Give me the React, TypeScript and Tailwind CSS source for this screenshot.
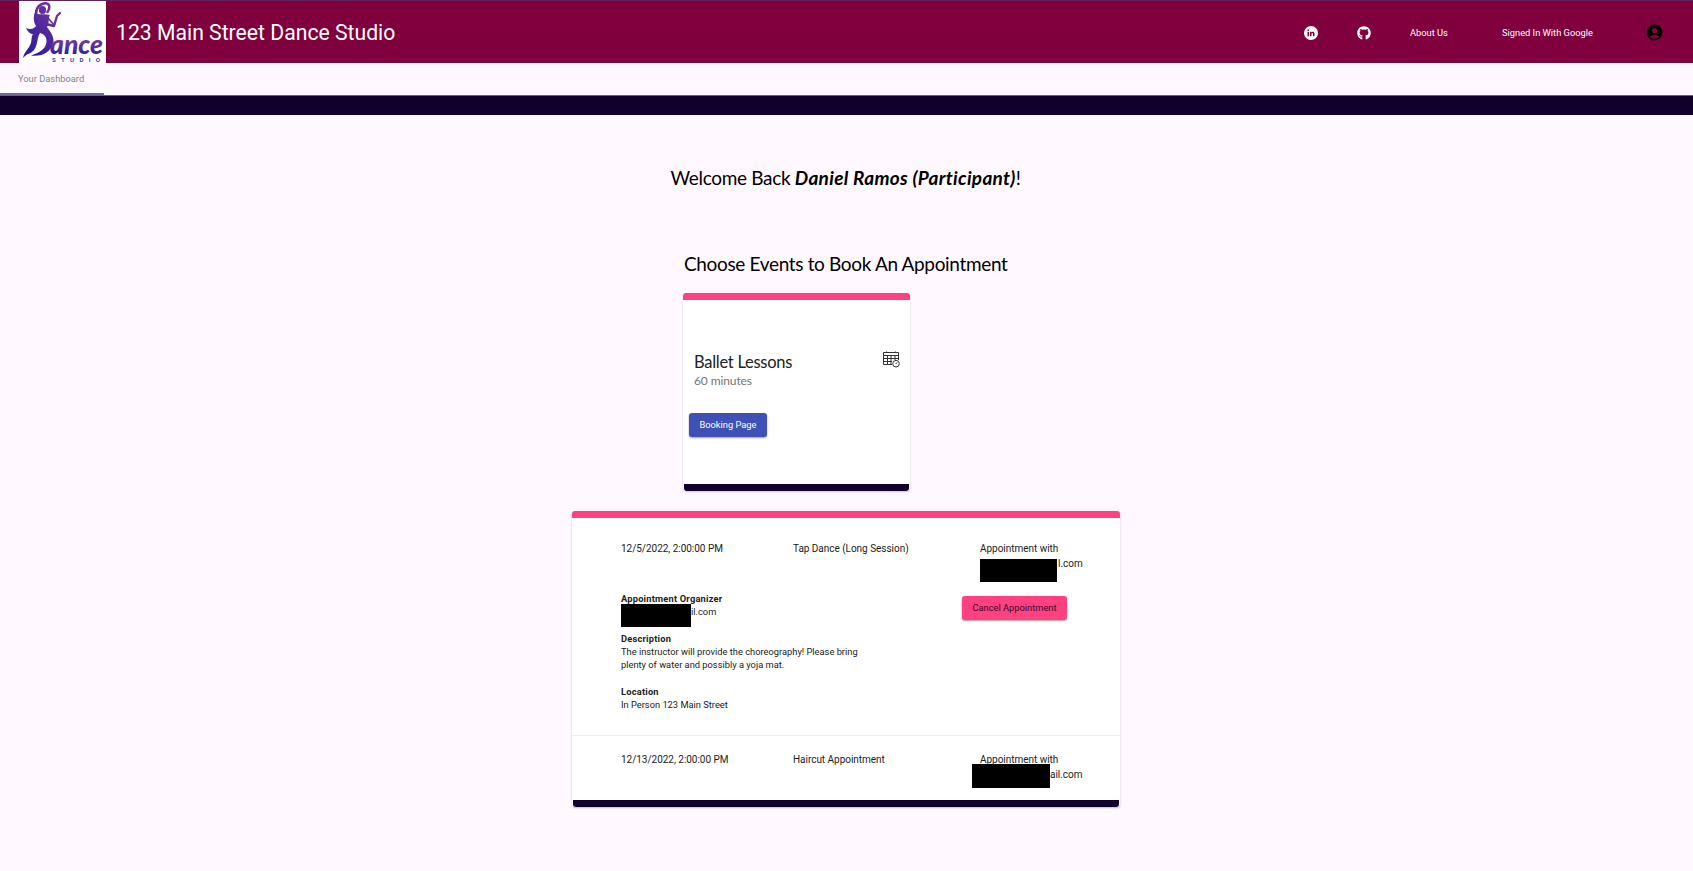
import { FaGithub } from "react-icons/fa";
import { MdAccountCircle } from "react-icons/md";

function Logo() {
  return (
    <svg className="ml-[19px] block h-[62px] w-[87px] shrink-0 bg-white" viewBox="0 0 87 62">
      <defs>
        <linearGradient id="ink" x1="0" y1="58" x2="52" y2="0" gradientUnits="userSpaceOnUse">
          <stop offset="0" stopColor="#1c1a9c" />
          <stop offset="0.5" stopColor="#54289c" />
          <stop offset="1" stopColor="#8a3d9a" />
        </linearGradient>
        <linearGradient id="word" x1="0" y1="54" x2="0" y2="38" gradientUnits="userSpaceOnUse">
          <stop offset="0" stopColor="#2b219c" />
          <stop offset="1" stopColor="#7d3a9c" />
        </linearGradient>
      </defs>
      <g fill="none" stroke="url(#ink)" strokeLinecap="round" strokeLinejoin="round">
        <path d="M17.500 15C16 8 20 3 26 2.200C31 2 31.500 7 28.500 11" strokeWidth="2.600" />
        <path d="M27 23L35 25L38 15L41 12" strokeWidth="2.400" />
        <path d="M29 17L35 24" strokeWidth="1.800" />
      </g>
      <g fill="url(#ink)">
        <ellipse cx="23.500" cy="9" rx="3.600" ry="4" />
        <path d="M16 11C19 15 25 12 31 14C28.500 18 31 22 28 26C32 31 36 37 34 43C31.500 51 23 56 12 54.500C19 52 26.500 49 27.500 41C28 36 25 33 21 32C18 36 19 44 15 49C12 53 8 52 4 57C5 51 10 48 12 42C13 38 12 36 14 33C11 33 9 31 7 27C11 29 15 28 17 25C14.500 21 14 16 16 11Z" />
      </g>
      <text x="31" y="53.200" fontSize="26" fontStyle="italic" fontWeight="900" fontFamily="Lato, sans-serif" textLength="53" lengthAdjust="spacingAndGlyphs" fill="url(#word)">ance</text>
      <text x="33" y="61" fontSize="6.200" fontWeight="700" fontFamily="Roboto, sans-serif" textLength="48" fill="#4b3a94">STUDIO</text>
    </svg>
  );
}

function LinkedinIcon() {
  return (
    <span className="flex h-[14px] w-[14px] items-center justify-center overflow-hidden rounded-full bg-white text-[#80003e]">
      <svg className="h-[14px] w-[14px]" viewBox="0 0 14 14" fill="currentColor">
        <path d="M3.500 5.700H5V10.300H3.500ZM3.500 3.600H5V5H3.500ZM6 5.700H7.400V6.400C8.200 5.200 10.500 5.300 10.500 7.500V10.300H9V7.900C9 6.500 7.500 6.600 7.500 7.800V10.300H6Z" />
      </svg>
    </span>
  );
}

function CalendarIcon() {
  return (
    <svg className="h-[17px] w-[17px]" viewBox="0 0 17 17" fill="none" stroke="#333" strokeWidth="1">
      <path d="M0.500 1.500H15.500V9M0.500 1.500V13.500H9M0.500 4.500H15.500M0.500 7.500H15.500M0.500 10.500H9M4.500 4.500V13.500M8 4.500V13.500M12 4.500V9" />
      <path d="M3.500 0.500V2M12.500 0.500V2" />
      <circle cx="13" cy="12.700" r="3.300" fill="#fff" />
      <path d="M12.700 13L14 11.500" />
    </svg>
  );
}

export default function App() {
  return (
    <div className="flex h-[871px] w-[1693px] flex-col overflow-hidden bg-[#fff8ff] font-['Roboto',sans-serif] text-[10px] text-[#212121]">
      <header className="flex h-[63px] shrink-0 items-center border-t border-[#61215f] bg-[#80003e] text-white">
        <Logo />
        <h1 className="ml-[10px] pt-px text-[21.2px] leading-none">123 Main Street Dance Studio</h1>
        <div className="ml-auto flex items-center pt-px text-[9.3px] leading-none">
          <LinkedinIcon />
          <FaGithub className="ml-[39px] h-[14px] w-[14px]" />
          <span className="ml-[39px] w-[92px]">About Us</span>
          <span className="w-[143px]">Signed In With Google</span>
          <MdAccountCircle className="mr-[29px] h-[19px] w-[19px] text-black" />
        </div>
      </header>
      <nav className="flex h-[33px] shrink-0 border-b border-[#665f7c]">
        <div className="flex h-[32px] w-[104px] items-center border-b-2 border-[#6d6c9f] pl-[18px] pt-[2px] text-[9.3px] text-[#858087]">
          Your Dashboard
        </div>
      </nav>
      <div className="h-[19px] shrink-0 bg-[#11002b]" />
      <main className="mr-[2px] flex flex-col items-center font-['Lato',sans-serif] text-black">
        <h2 className="mt-[50px] whitespace-nowrap text-[19px] leading-[26px] tracking-[-0.33px]">
          Welcome Back <b className="tracking-[0.3px]"><i>Daniel Ramos (Participant)</i></b>!
        </h2>
        <section className="mt-[60px] w-[325px]">
          <h2 className="whitespace-nowrap pl-px text-[19px] leading-[26px] tracking-[-0.34px]">Choose Events to Book An Appointment</h2>
          <article className="mt-[16px] flex h-[198px] w-[227px] flex-col rounded-[3px] bg-white shadow-[0_1px_2px_rgba(0,0,0,0.2)]">
            <div className="h-[7px] rounded-t-[3px] bg-[#ff4081]" />
            <div className="flex justify-between pl-[11px] pr-[10px] pt-[51px]">
              <div>
                <h3 className="text-[16.5px] leading-[22px] tracking-[-0.27px] text-[#212121]">Ballet Lessons</h3>
                <p className="text-[12px] leading-[16px] tracking-[-0.1px] text-[#757575]">60 minutes</p>
              </div>
              <CalendarIcon />
            </div>
            <button className="ml-[6px] mt-[24px] h-[24px] w-[78px] rounded-[3px] bg-[#3f51b5] font-['Roboto',sans-serif] text-[9.3px] text-white shadow-[0_1px_2px_rgba(0,0,0,0.4)]">
              Booking Page
            </button>
            <div className="mx-px mt-auto h-[7px] rounded-b-[3px] bg-[#11002b]" />
          </article>
        </section>
        <section className="mt-[20px] flex h-[296px] w-[548px] flex-col rounded-[3px] bg-white font-['Roboto',sans-serif] text-[#212121] shadow-[0_1px_2px_rgba(0,0,0,0.25)]">
          <div className="h-[7px] shrink-0 rounded-t-[3px] bg-[#ff4081]" />
          <div className="h-[218px] border-b border-[#eeeeee] pl-[49.5px]">
            <div className="flex pt-[23px] leading-[15px] tracking-[-0.03px]">
              <span className="w-[172px]">12/5/2022, 2:00:00 PM</span>
              <span className="w-[187px]">Tap Dance (Long Session)</span>
              <div>
                <div>Appointment with</div>
                <div className="flex h-[24px]">
                  <span className="mr-px mt-[3px] h-[23px] w-[77px] bg-black" />l.com
                </div>
              </div>
            </div>
            <div className="flex pt-[12px]">
              <div className="w-[341px] text-[9.3px] leading-[13.3px]">
                <b className="block tracking-[0.2px]">Appointment Organizer</b>
                <div className="flex h-[26.600px]">
                  <span className="-mt-[1px] h-[23px] w-[70px] bg-black" />il.com
                </div>
                <b className="block tracking-[0.2px]">Description</b>
                <p className="w-[250px]">The instructor will provide the choreography! Please bring<br />plenty of water and possibly a yoja mat.</p>
                <b className="mt-[13.300px] block tracking-[0.2px]">Location</b>
                <p>In Person 123 Main Street</p>
              </div>
              <button className="mt-[4px] h-[24px] w-[105px] rounded-[3px] bg-[#ff4081] text-[9.3px] text-[#3c0a26] shadow-[0_1px_2px_rgba(0,0,0,0.4)]">
                Cancel Appointment
              </button>
            </div>
          </div>
          <div className="flex pl-[49.5px] pt-[16px] leading-[15px] tracking-[-0.03px]">
            <span className="w-[172px]">12/13/2022, 2:00:00 PM</span>
            <span className="w-[187px]">Haircut Appointment</span>
            <div>
              <div>Appointment with</div>
              <div className="-ml-[8px] flex h-[24px]">
                <span className="-mt-[3px] h-[24px] w-[78px] bg-black" />ail.com
              </div>
            </div>
          </div>
          <div className="mx-px mt-auto h-[7px] shrink-0 rounded-b-[3px] bg-[#11002b]" />
        </section>
      </main>
    </div>
  );
}
